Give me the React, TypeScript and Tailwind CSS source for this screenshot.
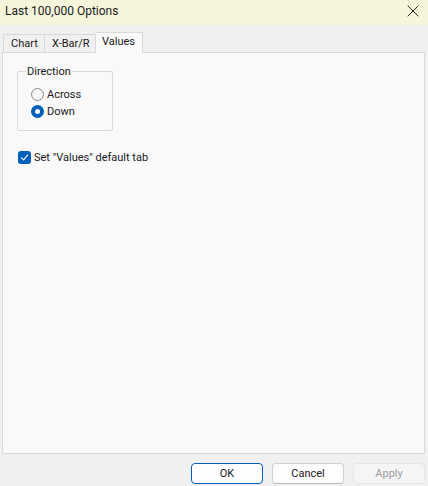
import { X } from 'lucide-react';

function Radio({ label, checked }: { label: string; checked?: boolean }) {
  return (
    <div className="flex items-center h-[17px]">
      {checked ? (
        <span className="w-[13px] h-[13px] rounded-full bg-[#005fb8] flex items-center justify-center">
          <span className="w-[5px] h-[5px] rounded-full bg-white"></span>
        </span>
      ) : (
        <span className="w-[13px] h-[13px] rounded-full border border-[#8a8a8a] bg-[#f6f6f6]"></span>
      )}
      <span className="ml-[3px]">{label}</span>
    </div>
  );
}

export default function App() {
  return (
    <div className="w-[428px] h-[486px] bg-[#f0f0f0] flex flex-col text-[11px] text-[#1a1a1a] font-['Roboto','Liberation_Sans',sans-serif] leading-none">
      {/* Title bar */}
      <div className="h-[25px] bg-[#f5f5dc] flex items-center justify-between pl-[5px] pr-[5px] pb-[3px]">
        <span className="text-[12px]">Last 100,000 Options</span>
        <X size={20} strokeWidth={1} className="text-black" />
      </div>

      {/* Tabs */}
      <div className="flex items-end h-[27px] pl-[3px]">
        <div className="h-[18px] w-[42px] border border-b-0 border-[#d9d9d9] bg-[#f0f0f0] flex items-center pl-[7px]">Chart</div>
        <div className="h-[18px] w-[51px] border border-b-0 border-l-0 border-[#d9d9d9] bg-[#f0f0f0] flex items-center pl-[7px]">X-Bar/R</div>
        <div className="h-[21px] w-[47px] border border-b-0 border-l-0 border-[#d9d9d9] bg-[#f9f9f9] flex items-center pl-[6px] pb-[3px] -mb-px relative z-10">Values</div>
      </div>

      {/* Panel */}
      <div className="ml-[2px] w-[423px] h-[402px] border border-[#d9d9d9] bg-[#f9f9f9] pt-[13px] pl-[14px]">
        <fieldset className="w-[96px] h-[65px] border border-[#d9d9d9] rounded-[2px] pl-[13px] m-0 pt-[9px]">
          <legend className="px-[1px] ml-[-5px]">Direction</legend>
          <Radio label="Across" />
          <Radio label="Down" checked />
        </fieldset>

        <div className="flex items-center mt-[20px] ml-[1px]">
          <span className="w-[13px] h-[13px] rounded-[3px] bg-[#005fb8] flex items-center justify-center">
            <svg width="9" height="9" viewBox="0 0 9 9" fill="none">
              <path d="M1.5 4.8 L3.6 6.8 L7.6 2.2" stroke="white" strokeWidth="1.1" strokeLinecap="round" strokeLinejoin="round" />
            </svg>
          </span>
          <span className="ml-[3px]">Set "Values" default tab</span>
        </div>
      </div>

      {/* Buttons */}
      <div className="flex justify-end gap-[9px] pr-[3px] pt-[9px]">
        <button className="w-[72px] h-[21px] rounded-[4px] border border-[#005fb8] bg-[#fdfdfd] flex items-center justify-center">OK</button>
        <button className="w-[72px] h-[21px] rounded-[4px] border border-[#d0d0d0] border-b-[#b8b8b8] bg-[#fdfdfd] flex items-center justify-center">Cancel</button>
        <button className="w-[72px] h-[21px] rounded-[4px] border border-[#e5e5e5] bg-[#f5f5f5] text-[#9d9d9d] flex items-center justify-center">Apply</button>
      </div>
    </div>
  );
}
